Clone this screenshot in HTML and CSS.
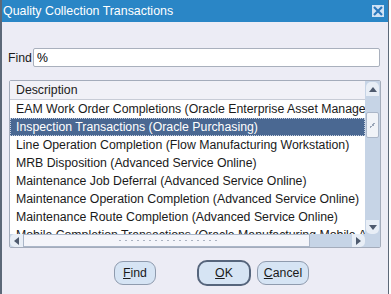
FILE: index.html
```html
<!DOCTYPE html>
<html lang="en">
<head>
    <meta charset="UTF-8">
    <title>Quality Collection Transactions</title>
    <link rel="stylesheet" href="styles.css">
</head>
<body>

<div class="window">

    <div class="titlebar">
        <span class="title">Quality Collection Transactions</span>
        <span class="close">
            <svg width="10" height="10" viewBox="0 0 10 10">
                <path d="M1 1 L9 9 M9 1 L1 9" stroke="#2a78bc" stroke-width="2.2" fill="none"/>
            </svg>
        </span>
    </div>

    <div class="content">

        <div class="find-row">
            <label for="find">Find</label>
            <input type="text" id="find" value="%">
        </div>

        <div class="list">
            <div class="list-main">
                <div class="list-view">
                    <div class="list-head">Description</div>
                    <div class="row">EAM Work Order Completions (Oracle Enterprise Asset Management)</div>
                    <div class="row selected">Inspection Transactions (Oracle Purchasing)</div>
                    <div class="row">Line Operation Completion (Flow Manufacturing Workstation)</div>
                    <div class="row">MRB Disposition (Advanced Service Online)</div>
                    <div class="row">Maintenance Job Deferral (Advanced Service Online)</div>
                    <div class="row">Maintenance Operation Completion (Advanced Service Online)</div>
                    <div class="row">Maintenance Route Completion (Advanced Service Online)</div>
                    <div class="row">Mobile Completion Transactions (Oracle Manufacturing Mobile Applications)</div>
                </div>
                <div class="vscroll">
                    <div class="sbtn"><span class="tri up"></span></div>
                    <div class="vthumb"><span class="grip"></span></div>
                    <div class="vspace"></div>
                    <div class="sbtn"><span class="tri down"></span></div>
                </div>
            </div>
            <div class="hscroll">
                <div class="hbtn"><span class="tri left"></span></div>
                <div class="hthumb"><span class="dots"></span></div>
                <div class="hspace"></div>
                <div class="hbtn"><span class="tri right"></span></div>
                <div class="corner"></div>
            </div>
        </div>

        <div class="buttons">
            <button class="btn btn-find"><u>F</u>ind</button>
            <button class="btn btn-ok"><u>O</u>K</button>
            <button class="btn btn-cancel"><u>C</u>ancel</button>
        </div>

    </div>
</div>

</body>
</html>
```

FILE: styles.css
```css
body {
    margin: 0;
    background: #ffffff;
    font-family: "Liberation Sans", Arial, sans-serif;
    font-size: 12.3px;
    color: #1a1a1a;
}

.window {
    width: 386px;
    height: 294px;
    background: #ececf5;
    border-left: 2px solid #5c6878;
    border-right: 1px solid #5c6878;
    display: flex;
    flex-direction: column;
}

.titlebar {
    height: 22px;
    background: #2a86c6;
    color: #fff;
    display: flex;
    align-items: center;
    justify-content: space-between;
    padding: 0 3px 0 1px;
}

.title {
    font-size: 12.4px;
    margin-bottom: 1px;
}

.close {
    width: 12px;
    height: 12px;
    background: #cfe2f4;
    display: flex;
    align-items: center;
    justify-content: center;
    margin-right: 1px;
}

.content {
    padding: 26px 0 0 6px;
}

.find-row {
    display: flex;
    align-items: center;
    height: 19px;
}

.find-row label {
    margin-right: 1px;
}

.find-row input {
    width: 347px;
    height: 19px;
    box-sizing: border-box;
    border: 1px solid #a9b0bd;
    border-radius: 2px;
    padding: 0 3px;
    font-family: "Liberation Sans", Arial, sans-serif;
    font-size: 12.3px;
    background: #fff;
}

.list {
    margin-top: 13px;
    margin-left: 1px;
    width: 370px;
    height: 166px;
    border: 1px solid #a4acbb;
    border-radius: 2px;
    display: flex;
    flex-direction: column;
    background: #fff;
}

.list-main {
    display: flex;
    height: 153px;
}

.list-view {
    flex: 1;
    overflow: hidden;
    white-space: nowrap;
}

.list-head {
    height: 18px;
    line-height: 18px;
    padding-left: 6px;
    background: #f1f1f7;
    border-bottom: 1px solid #c8ccd6;
    color: #222;
}

.row {
    height: 18px;
    line-height: 18px;
    padding-left: 6px;
}

.row.selected {
    background: #4a6892;
    color: #fff;
    outline: 1px dotted #c8d0e0;
    outline-offset: -1px;
}

.vscroll {
    width: 15px;
    background: #c6d4e6;
    display: flex;
    flex-direction: column;
    align-items: center;
    padding-top: 1px;
}

.sbtn {
    width: 13px;
    height: 14px;
    background: #e8eef6;
    border-radius: 5px 5px 0 0;
    display: flex;
    align-items: center;
    justify-content: center;
}

.sbtn:last-child {
    border-radius: 0 0 5px 5px;
}

.vthumb {
    margin-top: 16px;
    width: 13px;
    height: 26px;
    background: #f0f3f8;
    border: 1px solid #aab6c8;
    box-sizing: border-box;
    border-radius: 2px;
    display: flex;
    align-items: center;
    justify-content: center;
}

.grip {
    width: 5px;
    height: 5px;
    background: linear-gradient(135deg, transparent 40%, #9aa6b8 40%, #9aa6b8 60%, transparent 60%);
}

.vspace {
    flex: 1;
}

.tri {
    width: 0;
    height: 0;
    border: 4px solid transparent;
}

.tri.up {
    border-bottom: 5px solid #4e5a6e;
    border-top-width: 0;
}

.tri.down {
    border-top: 5px solid #4e5a6e;
    border-bottom-width: 0;
}

.tri.left {
    border-right: 5px solid #4e5a6e;
    border-left-width: 0;
}

.tri.right {
    border-left: 5px solid #4e5a6e;
    border-right-width: 0;
}

.hscroll {
    height: 13px;
    display: flex;
    background: #c6d4e6;
}

.hbtn {
    width: 13px;
    background: #e8eef6;
    display: flex;
    align-items: center;
    justify-content: center;
    border-radius: 5px 0 0 5px;
}

.hbtn:nth-child(4) {
    border-radius: 0 5px 5px 0;
}

.hthumb {
    width: 287px;
    background: #f4f5fa;
    border: 1px solid #aab6c8;
    box-sizing: border-box;
    display: flex;
    align-items: center;
    justify-content: center;
}

.dots {
    width: 100px;
    height: 5px;
    background-image: radial-gradient(circle, #aab2c0 0.8px, transparent 1px);
    background-size: 6px 5px;
}

.hspace {
    flex: 1;
}

.corner {
    width: 15px;
    background: #c6d4e6;
}

.buttons {
    display: flex;
    align-items: center;
    margin-top: 12px;
    padding-left: 106px;
}

.btn {
    font-family: "Liberation Sans", Arial, sans-serif;
    font-size: 12.3px;
    color: #1a1a1a;
    background: #d6e4f4;
    border: 1px solid #8f9bae;
    border-radius: 9px;
    height: 24px;
    padding: 0;
    cursor: pointer;
}

.btn-find {
    width: 42px;
}

.btn-ok {
    width: 54px;
    height: 26px;
    margin-left: 41px;
    border: 2px solid #56657c;
    border-radius: 10px;
}

.btn-cancel {
    width: 52px;
    margin-left: 6px;
}
```
